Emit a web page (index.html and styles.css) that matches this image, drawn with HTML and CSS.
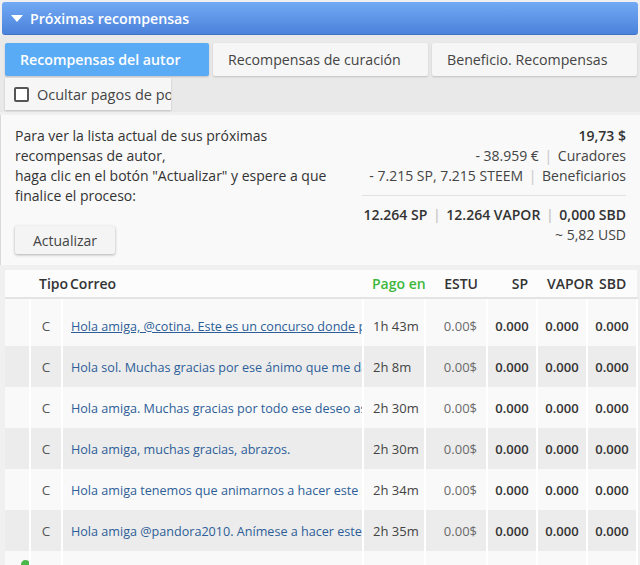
FILE: index.html
```html
<!DOCTYPE html>
<html lang="es">
<head>
<meta charset="utf-8">
<title>Próximas recompensas</title>
<link rel="stylesheet" href="styles.css">
</head>
<body>
<div class="page">
  <div class="header">
    <span class="caret"></span>
    <span class="title">Próximas recompensas</span>
  </div>
  <div class="strip">
    <div class="tabs">
      <div class="tab active">Recompensas del autor</div>
      <div class="tab">Recompensas de curación</div>
      <div class="tab">Beneficio. Recompensas</div>
    </div>
    <div class="options">
      <label class="opt"><span class="box"></span><span class="opt-text">Ocultar pagos de post</span></label>
    </div>
  </div>
  <div class="summary">
    <div class="intro">
      <p class="intro-text">Para ver la lista actual de sus próximas<br>recompensas de autor,<br>haga clic en el botón "Actualizar" y espere a que<br>finalice el proceso:</p>
      <button class="btn">Actualizar</button>
    </div>
    <div class="totals">
      <div class="strong">19,73 $</div>
      <div>- 38.959 € <span class="sep">|</span> Curadores</div>
      <div>- 7.215 SP, 7.215 STEEM <span class="sep">|</span> Beneficiarios</div>
      <div class="rule"></div>
      <div class="strong">12.264 SP <span class="sep">|</span> 12.264 VAPOR <span class="sep">|</span> 0,000 SBD</div>
      <div>~ 5,82 USD</div>
    </div>
  </div>
  <table class="grid">
    <colgroup>
      <col class="c0"><col class="c1"><col class="c2"><col class="c3"><col class="c4"><col class="c5"><col class="c6"><col class="c7">
    </colgroup>
    <thead>
      <tr>
        <th></th><th class="tipo">Tipo</th><th class="left">Correo</th><th class="pago">Pago en</th><th class="num">ESTU</th><th class="num">SP</th><th class="vap">VAPOR</th><th class="sbd">SBD</th>
      </tr>
    </thead>
    <tbody>
      <tr class="first">
        <td></td><td class="t">C</td><td class="post"><div class="clip"><a class="hover">Hola amiga, @cotina. Este es un concurso donde puede participar</a></div></td><td class="time">1h 43m</td><td class="usd">0.00$</td><td class="val">0.000</td><td class="val">0.000</td><td class="val">0.000</td>
      </tr>
      <tr>
        <td></td><td class="t">C</td><td class="post"><div class="clip"><a>Hola sol. Muchas gracias por ese ánimo que me das</a></div></td><td class="time">2h 8m</td><td class="usd">0.00$</td><td class="val">0.000</td><td class="val">0.000</td><td class="val">0.000</td>
      </tr>
      <tr>
        <td></td><td class="t">C</td><td class="post"><div class="clip"><a>Hola amiga. Muchas gracias por todo ese deseo así</a></div></td><td class="time">2h 30m</td><td class="usd">0.00$</td><td class="val">0.000</td><td class="val">0.000</td><td class="val">0.000</td>
      </tr>
      <tr>
        <td></td><td class="t">C</td><td class="post"><div class="clip"><a>Hola amiga, muchas gracias, abrazos.</a></div></td><td class="time">2h 30m</td><td class="usd">0.00$</td><td class="val">0.000</td><td class="val">0.000</td><td class="val">0.000</td>
      </tr>
      <tr>
        <td></td><td class="t">C</td><td class="post"><div class="clip"><a>Hola amiga tenemos que animarnos a hacer este concurso</a></div></td><td class="time">2h 34m</td><td class="usd">0.00$</td><td class="val">0.000</td><td class="val">0.000</td><td class="val">0.000</td>
      </tr>
      <tr>
        <td></td><td class="t">C</td><td class="post"><div class="clip"><a>Hola amiga @pandora2010. Anímese a hacer este concurso</a></div></td><td class="time">2h 35m</td><td class="usd">0.00$</td><td class="val">0.000</td><td class="val">0.000</td><td class="val">0.000</td>
      </tr>
      <tr>
        <td class="mark"><span class="dot"></span></td><td class="t"></td><td class="post"></td><td class="time"></td><td class="usd"></td><td class="val"></td><td class="val"></td><td class="val"></td>
      </tr>
    </tbody>
  </table>
</div>
</body>
</html>
```
FILE: styles.css
```css
* { box-sizing: border-box; }
html, body { margin: 0; padding: 0; }
body {
  background: #f0f0f0;
  font-family: "Open Sans", "Noto Sans", sans-serif;
  color: #333;
  width: 640px;
  height: 565px;
  overflow: hidden;
}
.page { padding-top: 2px; }

.header {
  margin: 0 2px;
  height: 33px;
  border-radius: 3px;
  background: linear-gradient(#72aaf4, #4b82db);
  border-bottom: 1px solid #3f72c4;
  display: flex;
  align-items: center;
  padding-left: 9px;
  gap: 7px;
}
.caret {
  width: 0; height: 0;
  border-left: 6px solid transparent;
  border-right: 6px solid transparent;
  border-top: 7px solid #fff;
  margin-top: 1px;
}
.title {
  color: #fff;
  font-size: 14.2px;
  font-weight: 600;
}

.strip {
  background: #e9e9e9;
  padding: 8px 3px 2px 5px;
}
.tabs { display: flex; gap: 4px; }
.tab {
  height: 33px;
  display: flex;
  align-items: center;
  padding: 0 0 0 15px;
  font-size: 14.2px;
  white-space: nowrap;
  color: #444;
  background: #f6f6f6;
  border-radius: 2px;
  box-shadow: 0 1px 2px rgba(0,0,0,0.18);
}
.tab:nth-child(1) { width: 204px; }
.tab:nth-child(2) { width: 215px; }
.tab:nth-child(3) { width: 205px; }
.tab.active {
  background: #5aabf5;
  color: #fff;
  font-weight: 600;
}
.options { margin-top: 2px; display: flex; }
.opt {
  width: 166px;
  height: 32px;
  display: flex;
  align-items: center;
  padding-left: 9px;
  gap: 8px;
  background: #f6f6f6;
  box-shadow: 0 1px 2px rgba(0,0,0,0.18);
  overflow: hidden;
  white-space: nowrap;
  font-size: 14.5px;
  color: #444;
}
.box {
  flex: none;
  width: 15px; height: 15px;
  border: 2px solid #555;
  border-radius: 2px;
  background: #fff;
}

.summary {
  margin-top: 3px;
  background: #f9f9f9;
  border-left: 1px solid #d8d8d8;
  padding: 11px 14px 11px 14px;
  display: flex;
  justify-content: space-between;
  font-size: 14px;
  line-height: 20px;
}
.intro-text { margin: 0; }
.btn {
  margin-top: 20px;
  width: 100px;
  height: 28px;
  font-family: inherit;
  font-size: 14px;
  color: #444;
  background: #f4f4f4;
  border: none;
  border-radius: 2px;
  box-shadow: 0 1px 3px rgba(0,0,0,0.3);
}
.totals { text-align: right; color: #444; }
.totals .strong { font-weight: 600; color: #333; }
.sep { color: #c8c8c8; padding: 0 2px; }
.rule {
  width: 264px;
  margin: 9px 0 9px auto;
  border-top: 1px solid #e2e2e2;
}

.grid {
  margin: 5px 3px 0 5px;
  width: 632px;
  table-layout: fixed;
  border-collapse: collapse;
  font-size: 13px;
}
.c0 { width: 25px; }
.c1 { width: 32px; }
.c2 { width: 301px; }
.c3 { width: 62px; }
.c4 { width: 62px; }
.c5 { width: 50px; }
.c6 { width: 50px; }
.c7 { width: 50px; }
.grid thead th {
  height: 28px;
  background: #fcfcfc;
  font-size: 14px;
  font-weight: 600;
  color: #333;
  border-bottom: 2px solid #e4e4e4;
  padding: 0;
  white-space: nowrap;
  overflow: visible;
}
.grid th.tipo { text-align: left; padding-left: 9px; }
.grid th.left { text-align: left; padding-left: 8px; }
.grid th.pago { text-align: left; padding-left: 9px; color: #3db83d; }
.grid th.num { text-align: right; padding-right: 9px; }
.grid th.vap { text-align: left; padding-left: 10px; }
.grid th.sbd { text-align: left; padding-left: 12px; }
.grid tbody td {
  height: 41px;
  padding: 0;
  border-right: 2px solid #fff;
  white-space: nowrap;
  overflow: hidden;
}
.grid tbody tr:nth-child(odd) td { background: #f9f9f9; }
.grid tbody tr:nth-child(even) td { background: #ececec; }
.grid tbody tr.first td { height: 48px; padding-top: 6px; }
.grid td.t { text-align: center; color: #555; font-size: 13.5px; }
.grid td.post { padding-left: 8px; }
.clip { width: 293px; overflow: hidden; white-space: nowrap; }
.grid td.post a { color: #2d5e98; text-decoration: none; font-size: 12.6px; }
.grid td.post a.hover { text-decoration: underline; }
.grid td.time { padding-left: 9px; color: #444; }
.grid td.usd { text-align: right; padding-right: 9px; color: #6a6a6a; }
.grid td.val { text-align: center; font-weight: 600; color: #333; font-size: 13px; }
.grid td.mark { vertical-align: top; }
.dot {
  display: block;
  width: 9px; height: 9px;
  margin: 9px 0 0 16px;
  border-radius: 50%;
  background: #4cb84c;
}
```
